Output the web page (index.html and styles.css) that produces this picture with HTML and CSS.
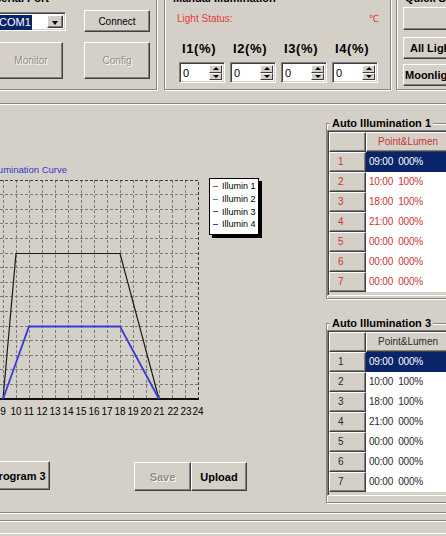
FILE: index.html
```html
<!DOCTYPE html>
<html>
<head>
<meta charset="utf-8">
<title>Illumination Controller</title>
<link rel="stylesheet" href="styles.css">
</head>
<body>
<div class="window">
  <div class="toprow">
    <div class="group g-serial">
      <span class="gtitle">Serial Port</span>
      <div class="serial-grid">
        <div class="combo"><span class="combo-text"><span class="sel">COM1</span></span><span class="combo-btn"></span></div>
        <button class="btn">Connect</button>
        <button class="btn disabled monitor">Monitor</button>
        <button class="btn disabled">Config</button>
      </div>
    </div>
    <div class="group g-manual">
      <span class="gtitle">Manual Illumination</span>
      <div class="status-row"><span>Light Status:</span><span>℃</span></div>
      <div class="spins">
        <div class="spin-col"><div class="spin-label">I1(%)</div><div class="spin"><span class="val">0</span><span class="arrows"><span class="arr up"></span><span class="arr dn"></span></span></div></div>
        <div class="spin-col"><div class="spin-label">I2(%)</div><div class="spin"><span class="val">0</span><span class="arrows"><span class="arr up"></span><span class="arr dn"></span></span></div></div>
        <div class="spin-col"><div class="spin-label">I3(%)</div><div class="spin"><span class="val">0</span><span class="arrows"><span class="arr up"></span><span class="arr dn"></span></span></div></div>
        <div class="spin-col"><div class="spin-label">I4(%)</div><div class="spin"><span class="val">0</span><span class="arrows"><span class="arr up"></span><span class="arr dn"></span></span></div></div>
      </div>
    </div>
    <div class="group g-quick">
      <span class="gtitle">Quick Set</span>
      <button class="btn qbtn q1"></button>
      <button class="btn qbtn bold q2">All Lights</button>
      <button class="btn qbtn bold q3">Moonlight</button>
    </div>
  </div>
  <div class="sep"></div>
  <div class="main">
    <div class="left">
      <div class="chart-title">Illumination Curve</div>
      <div class="chart">
        <svg class="plot" width="206" height="246" viewBox="0 0 206 246">
          <path class="grid-line" d="M3.5 4V223M16.5 4V223M29.5 4V223M42.5 4V223M55.5 4V223M68.5 4V223M81.5 4V223M94.5 4V223M107.5 4V223M120.5 4V223M133.5 4V223M146.5 4V223M159.5 4V223M172.5 4V223M185.5 4V223"/>
          <path class="grid-line" d="M0 18.5H198M0 33.5H198M0 47.5H198M0 62.5H198M0 77.5H198M0 91.5H198M0 106.5H198M0 120.5H198M0 135.5H198M0 150.5H198M0 164.5H198M0 179.5H198M0 193.5H198M0 208.5H198"/>
          <path class="frame" d="M0 4.5H198.5V223"/>
          <path class="axis" d="M0 223H199"/>
          <polyline class="l3" points="3,223 16,77.5 120,77.5 159,223"/>
          <polyline class="l4" points="3,223 29,150.5 120,150.5 159,223"/>
          <g class="axis-labels">
            <text x="3" y="239">9</text>
            <text x="16" y="239">10</text>
            <text x="29" y="239">11</text>
            <text x="42" y="239">12</text>
            <text x="55" y="239">13</text>
            <text x="68" y="239">14</text>
            <text x="81" y="239">15</text>
            <text x="94" y="239">16</text>
            <text x="107" y="239">17</text>
            <text x="120" y="239">18</text>
            <text x="133" y="239">19</text>
            <text x="146" y="239">20</text>
            <text x="159" y="239">21</text>
            <text x="173" y="239">22</text>
            <text x="186" y="239">23</text>
            <text x="198" y="239">24</text>
          </g>
        </svg>
        <div class="legend">
          <div class="leg-item"><span class="leg-dash c1"></span>Illumin 1</div>
          <div class="leg-item"><span class="leg-dash c2"></span>Illumin 2</div>
          <div class="leg-item"><span class="leg-dash c3"></span>Illumin 3</div>
          <div class="leg-item"><span class="leg-dash c4"></span>Illumin 4</div>
        </div>
      </div>
      <div class="actions">
        <button class="btn bold prog">Program 3</button>
        <button class="btn bold disabled save">Save</button>
        <button class="btn bold upload">Upload</button>
      </div>
    </div>
    <div class="right">
      <div class="group g-auto red">
        <span class="gtitle">Auto Illumination 1</span>
        <div class="grid">
          <div class="row"><div class="rh"></div><div class="hd">Point&amp;Lumen</div></div>
          <div class="row"><div class="rh">1</div><div class="cell selected">09:00  000%</div></div>
          <div class="row"><div class="rh">2</div><div class="cell">10:00  100%</div></div>
          <div class="row"><div class="rh">3</div><div class="cell">18:00  100%</div></div>
          <div class="row"><div class="rh">4</div><div class="cell">21:00  000%</div></div>
          <div class="row"><div class="rh">5</div><div class="cell">00:00  000%</div></div>
          <div class="row"><div class="rh">6</div><div class="cell">00:00  000%</div></div>
          <div class="row"><div class="rh">7</div><div class="cell">00:00  000%</div></div>
        </div>
      </div>
      <div class="group g-auto g-auto3 dark">
        <span class="gtitle">Auto Illumination 3</span>
        <div class="grid">
          <div class="row"><div class="rh"></div><div class="hd">Point&amp;Lumen</div></div>
          <div class="row"><div class="rh">1</div><div class="cell selected">09:00  000%</div></div>
          <div class="row"><div class="rh">2</div><div class="cell">10:00  100%</div></div>
          <div class="row"><div class="rh">3</div><div class="cell">18:00  100%</div></div>
          <div class="row"><div class="rh">4</div><div class="cell">21:00  000%</div></div>
          <div class="row"><div class="rh">5</div><div class="cell">00:00  000%</div></div>
          <div class="row"><div class="rh">6</div><div class="cell">00:00  000%</div></div>
          <div class="row"><div class="rh">7</div><div class="cell">00:00  000%</div></div>
        </div>
      </div>
    </div>
  </div>
  <div class="footer"></div>
  <div class="statusbar"></div>
</div>
</body>
</html>
```

FILE: styles.css
```css
* { box-sizing: border-box; }
html, body { margin: 0; padding: 0; }
body {
  width: 446px;
  height: 536px;
  overflow: hidden;
  background: #d4d0c8;
  font-family: "Liberation Sans", Arial, sans-serif;
  font-size: 10px;
  color: #000;
}
.window { margin-top: -2px; }
.toprow { display: flex; height: 92px; }

.group {
  position: relative;
  flex-shrink: 0;
  border: 1px solid #888581;
  box-shadow: inset 1px 1px 0 #fff, 1px 1px 0 #fff;
}
.gtitle {
  position: absolute;
  top: -7px;
  left: 6px;
  padding: 0 2px;
  background: #d4d0c8;
  font-weight: bold;
  font-size: 11px;
  line-height: 12px;
  white-space: nowrap;
}

/* buttons */
.btn {
  display: block;
  margin: 0;
  padding: 0;
  background: #d4d0c8;
  border: 1px solid;
  border-color: #fff #404040 #404040 #fff;
  box-shadow: inset -1px -1px 0 #808080;
  font-family: "Liberation Sans", Arial, sans-serif;
  font-size: 10px;
  color: #000;
  white-space: nowrap;
  overflow: hidden;
}
.bold { font-weight: bold; font-size: 11px; }
.disabled { color: #8e8b86; text-shadow: 1px 1px 0 #fff; }

/* serial port */
.g-serial { margin-left: -15px; width: 172px; height: 92px; padding: 11px 6px 0 8px; }
.serial-grid {
  display: grid;
  grid-template-columns: 72px 66px;
  grid-template-rows: 22px 37px;
  column-gap: 18px;
  row-gap: 10px;
}
.combo {
  align-self: end;
  margin-bottom: 1px;
  height: 19px;
  background: #fff;
  border: 1px solid;
  border-color: #808080 #fff #fff #808080;
  box-shadow: inset 1px 1px 0 #404040, inset -1px -1px 0 #d4d0c8;
  display: flex;
  justify-content: space-between;
  padding: 2px;
}
.combo-text { padding-left: 1px; line-height: 15px; font-size: 11px; }
.sel { background: #0a246a; color: #fff; padding: 0 1px; display: inline-block; line-height: 15px; }
.combo-btn {
  position: relative;
  width: 16px;
  background: #d4d0c8;
  border: 1px solid;
  border-color: #fff #404040 #404040 #fff;
  box-shadow: inset -1px -1px 0 #808080;
}
.combo-btn::after {
  content: "";
  position: absolute;
  left: 4px;
  top: 5px;
  border-left: 3.5px solid transparent;
  border-right: 3.5px solid transparent;
  border-top: 4px solid #000;
}
.monitor { width: 64px; margin-left: 5px; }

/* manual illumination */
.g-manual { margin-left: 7px; width: 227px; height: 92px; padding: 14px 11px 0 12px; }
.status-row {
  display: flex;
  justify-content: space-between;
  height: 12px;
  line-height: 12px;
  color: #e53a3a;
}
.spins {
  display: grid;
  grid-template-columns: repeat(4, 46px);
  column-gap: 5px;
  margin-left: 2px;
  margin-top: 16px;
}
.spin-label {
  font-weight: bold;
  font-size: 13px;
  line-height: 15px;
  padding-left: 3px;
  letter-spacing: 0.6px;
  margin-bottom: 6px;
  white-space: nowrap;
}
.spin {
  width: 46px;
  height: 21px;
  background: #fff;
  border: 1px solid;
  border-color: #808080 #fff #fff #808080;
  box-shadow: inset 1px 1px 0 #404040, inset -1px -1px 0 #d4d0c8;
  display: flex;
  justify-content: space-between;
  padding: 2px;
}
.val { font-size: 11px; line-height: 17px; padding-left: 1px; }
.arrows { width: 13px; display: flex; flex-direction: column; }
.arr {
  flex: 1;
  position: relative;
  background: #d4d0c8;
  border: 1px solid;
  border-color: #fff #404040 #404040 #fff;
}
.arr::after {
  content: "";
  position: absolute;
  left: 50%;
  top: 50%;
  margin-left: -3px;
  border-left: 3px solid transparent;
  border-right: 3px solid transparent;
}
.up::after { border-bottom: 3px solid #000; margin-top: -2px; }
.dn::after { border-top: 3px solid #000; margin-top: -1px; }

/* quick set */
.g-quick { margin-left: 5px; width: 100px; height: 92px; padding: 8px 0 0 6px; }
.qbtn { width: 90px; text-align: left; }
.q1 { height: 23px; }
.q2 { height: 22px; margin-top: 7px; padding-left: 6px; }
.q3 { height: 22px; margin-top: 5px; padding-left: 1px; }

.sep { margin-top: 13px; border-top: 1px solid #888581; border-bottom: 1px solid #fff; }

/* main */
.main { display: flex; height: 398px; }
.left { width: 326px; flex-shrink: 0; }
.chart-title {
  margin-top: 59px;
  margin-left: -9px;
  color: #3434cc;
  font-size: 9.5px;
  line-height: 11px;
  white-space: nowrap;
}
.chart { display: flex; align-items: flex-start; margin-top: 1px; }
.plot { display: block; flex-shrink: 0; }
.grid-line { fill: none; stroke: #7c7a76; stroke-width: 1; stroke-dasharray: 3 2; }
.frame { fill: none; stroke: #3c3c3c; stroke-width: 1; stroke-dasharray: 3 2; }
.axis { stroke: #111; stroke-width: 2; }
.l3 { fill: none; stroke: #1a1a1a; stroke-width: 1.2; }
.l4 { fill: none; stroke: #3a3ad8; stroke-width: 1.8; }
.axis-labels text {
  font-family: "Liberation Sans", Arial, sans-serif;
  font-size: 10px;
  text-anchor: middle;
  fill: #000;
}
.legend {
  margin-left: 3px;
  margin-top: 2px;
  width: 50px;
  height: 57px;
  background: #fff;
  border: 1px solid #000;
  box-shadow: 3px 3px 0 #000;
  padding: 1px 0 0 3px;
  font-size: 9px;
}
.leg-item { display: flex; align-items: center; height: 12.7px; white-space: nowrap; }
.leg-dash { width: 5px; height: 1px; margin-right: 4px; flex-shrink: 0; }
.c1 { background: #d03c3c; }
.c2 { background: #3aa07a; }
.c3 { background: #505050; }
.c4 { background: #3c3cc8; }

.actions { display: flex; margin-top: 39px; }
.prog { margin-left: -13px; width: 63px; height: 29px; }
.save { margin-left: 84px; width: 57px; height: 29px; margin-top: 1px; }
.upload { width: 56px; height: 29px; margin-top: 1px; }

/* right column */
.right { width: 130px; flex-shrink: 0; }
.g-auto { margin-top: 18px; width: 130px; height: 176px; padding: 6px 0 2px 0; }
.g-auto3 { margin-top: 24px; height: 180px; }
.g-auto .gtitle { left: 3px; }
.grid {
  border: 1px solid;
  border-color: #808080 #fff #fff #808080;
  box-shadow: inset 1px 1px 0 #404040;
  padding: 1px 0 3px 1px;
  background: #d4d0c8;
}
.row { display: flex; height: 20px; }
.rh, .hd {
  flex-shrink: 0;
  background: #d4d0c8;
  border: 1px solid;
  border-color: #fff #404040 #404040 #fff;
  box-shadow: inset -1px -1px 0 #808080;
  line-height: 18px;
}
.rh { width: 37px; padding-left: 8px; }
.hd { width: 92px; padding-left: 11px; }
.cell {
  flex: 1;
  background: #fff;
  padding-left: 3px;
  line-height: 20px;
  white-space: pre;
  letter-spacing: -0.2px;
}
.red .rh, .red .hd, .red .cell { color: #cc3434; }
.dark .rh, .dark .hd, .dark .cell { color: #2a2a2a; }
.grid .cell.selected { background: #0a246a; color: #fff; }

.footer {
  margin-top: 9px;
  height: 9px;
  border-top: 1px solid #888581;
  border-bottom: 1px solid #888581;
  box-shadow: inset 0 1px 0 #fff, 0 1px 0 #fff;
}
.statusbar { margin-top: 2px; height: 11px; border-bottom: 1px solid #fff; }
```
